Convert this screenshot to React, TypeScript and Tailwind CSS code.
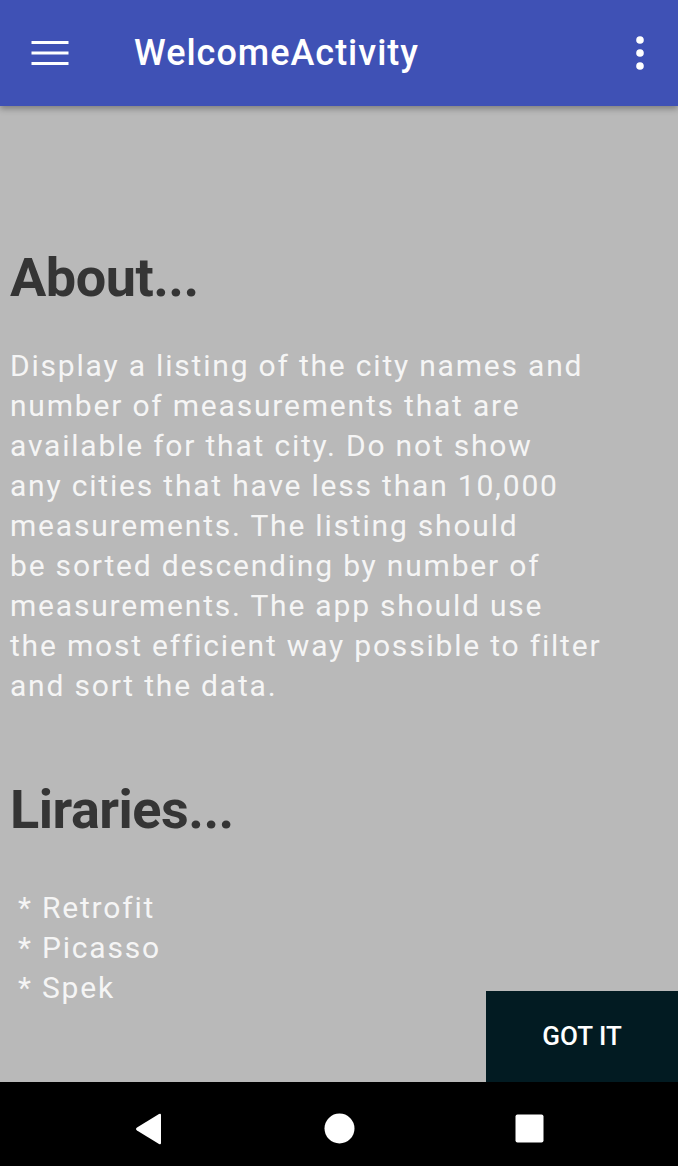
export default function App() {
  return (
    <div className="w-[678px] h-[1166px] flex flex-col bg-[#b9b9b9] overflow-hidden" style={{ fontFamily: 'Roboto, "Noto Sans", sans-serif' }}>
      <header className="relative z-10 h-[106px] shrink-0 bg-[#3f51b5] flex items-center shadow-[0_3px_6px_rgba(0,0,0,0.3)]">
        <div className="w-[100px] flex justify-center">
          <svg width="38" height="28" viewBox="0 0 38 28">
            <rect x="0.5" y="2" width="37" height="3" fill="#fff" />
            <rect x="0.5" y="12.5" width="37" height="3" fill="#fff" />
            <rect x="0.5" y="23" width="37" height="3" fill="#fff" />
          </svg>
        </div>
        <h1 className="ml-[34px] text-white text-[36px] font-medium tracking-[1px]">WelcomeActivity</h1>
        <div className="ml-auto mr-[34px]">
          <svg width="8" height="34" viewBox="0 0 8 34">
            <circle cx="4" cy="4" r="3.8" fill="#fff" />
            <circle cx="4" cy="17" r="3.8" fill="#fff" />
            <circle cx="4" cy="30" r="3.8" fill="#fff" />
          </svg>
        </div>
      </header>

      <main className="relative flex-1 flex flex-col px-[10px]">
        <h2 className="mt-[145px] text-[54px] leading-[54px] font-bold tracking-[-0.5px] text-[#353535]">About...</h2>
        <p className="mt-[41px] text-[30px] leading-[40px] tracking-[1.8px] text-[#f5f5f5] whitespace-nowrap">
          Display a listing of the city names and<br />
          number of measurements that are<br />
          available for that city. Do not show<br />
          any cities that have less than 10,000<br />
          measurements. The listing should<br />
          be sorted descending by number of<br />
          measurements. The app should use<br />
          the most efficient way possible to filter<br />
          and sort the data.
        </p>
        <h2 className="mt-[77px] text-[54px] leading-[54px] font-bold tracking-[-0.5px] text-[#353535]">Liraries...</h2>
        <ul className="mt-[51px] pl-[8px] text-[30px] leading-[40px] tracking-[1.8px] text-[#f5f5f5]">
          <li>* Retrofit</li>
          <li>* Picasso</li>
          <li>* Spek</li>
        </ul>
        <button className="absolute right-0 bottom-0 w-[192px] h-[91px] bg-[#021b22] text-white text-[26px] font-medium flex items-center justify-center">
          GOT IT
        </button>
      </main>

      <nav className="relative h-[84px] shrink-0 bg-black">
        <svg className="absolute left-[134px] top-[31px]" width="30" height="32" viewBox="0 0 30 32">
          <path d="M27 2 L27 30 Q27 32 25 31 L3 17.5 Q1 16 3 14.5 L25 1 Q27 0 27 2 Z" fill="#fff" />
        </svg>
        <svg className="absolute left-[324px] top-[31px]" width="31" height="31" viewBox="0 0 31 31">
          <ellipse cx="15.5" cy="15.5" rx="15" ry="15" fill="#fff" />
        </svg>
        <svg className="absolute left-[515px] top-[32px]" width="29" height="29" viewBox="0 0 29 29">
          <rect x="0.5" y="0.5" width="28" height="28" rx="2" fill="#fff" />
        </svg>
      </nav>
    </div>
  );
}
